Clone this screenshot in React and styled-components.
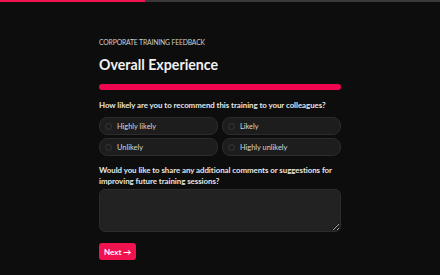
import React, { useState } from 'react'
import styled, { createGlobalStyle } from 'styled-components'

const GlobalStyle = createGlobalStyle`
    html, body {
        margin: 0;
        padding: 0;
        background: #0d0d0d;
    }
    body {
        font-family: Lato, "Noto Sans", sans-serif;
        color: #e8e8e8;
    }
`;

const options = ['Highly likely', 'Likely', 'Unlikely', 'Highly unlikely']

const App = () => {
    const [choice, setChoice] = useState(null)

    return (
        <Page>
            <GlobalStyle />
            <TopTrack>
                <TopFill style={{ width: '33%' }} />
            </TopTrack>
            <Form>
                <Eyebrow>CORPORATE TRAINING FEEDBACK</Eyebrow>
                <Title>Overall Experience</Title>
                <Bar />
                <Question>How likely are you to recommend this training to your colleagues?</Question>
                <Options>
                    {options.map(o => (
                        <Option key={o} onClick={() => setChoice(o)}>
                            <Radio checked={choice === o} />
                            {o}
                        </Option>
                    ))}
                </Options>
                <Question $tight>
                    Would you like to share any additional comments or suggestions for improving future training sessions?
                </Question>
                <Comments />
                <NextButton>Next →</NextButton>
            </Form>
        </Page>
    )
}

export default App

const Page = styled.div`
    width: 440px;
    height: 275px;
    background: #0d0d0d;
    overflow: hidden;
`;

const TopTrack = styled.div`
    height: 2px;
    background: #3a3a3a;
`;

const TopFill = styled.div`
    height: 100%;
    background: #f0134f;
`;

const Form = styled.div`
    width: 242px;
    margin: 0 auto;
    padding-top: 36px;
    display: flex;
    flex-direction: column;
`;

const Eyebrow = styled.div`
    font-size: 6.8px;
    line-height: 9px;
    color: #cfcfcf;
    letter-spacing: -0.15px;
`;

const Title = styled.h1`
    margin: 9px 0 0;
    font-size: 14.2px;
    line-height: 18px;
    font-weight: 700;
    color: #f2f2f2;
`;

const Bar = styled.div`
    margin-top: 10px;
    height: 6px;
    border-radius: 3px;
    background: #f0064f;
`;

const Question = styled.div`
    margin-top: ${p => (p.$tight ? '9px' : '10px')};
    font-size: 7.9px;
    font-weight: 700;
    line-height: 11px;
    letter-spacing: -0.05px;
    color: #e6e6e6;
`;

const Options = styled.div`
    margin-top: 6px;
    display: grid;
    grid-template-columns: 1fr 1fr;
    gap: 3px 4px;
`;

const Option = styled.div`
    height: 18px;
    box-sizing: border-box;
    border: 1px solid #2c2c2c;
    border-radius: 8px;
    background: #1d1d1d;
    display: flex;
    align-items: center;
    gap: 5px;
    padding-left: 5px;
    font-size: 7.4px;
    color: #d8d8d8;
    cursor: pointer;
`;

const Radio = styled.span`
    width: 7px;
    height: 7px;
    box-sizing: border-box;
    border-radius: 50%;
    border: 1px solid #383838;
    background: ${p => (p.checked ? '#f0134f' : 'transparent')};
`;

const Comments = styled.textarea`
    margin-top: 2px;
    height: 43px;
    box-sizing: border-box;
    background: #222222;
    border: 1px solid #2c2c2c;
    border-radius: 6px;
    resize: vertical;
    color: #e6e6e6;
    font-family: inherit;
    outline: none;
`;

const NextButton = styled.button`
    margin-top: 11px;
    align-self: flex-start;
    height: 17px;
    padding: 0 5px;
    border: none;
    border-radius: 3px;
    background: #f0134f;
    color: #ffffff;
    font-family: inherit;
    font-size: 8px;
    font-weight: 700;
`;
